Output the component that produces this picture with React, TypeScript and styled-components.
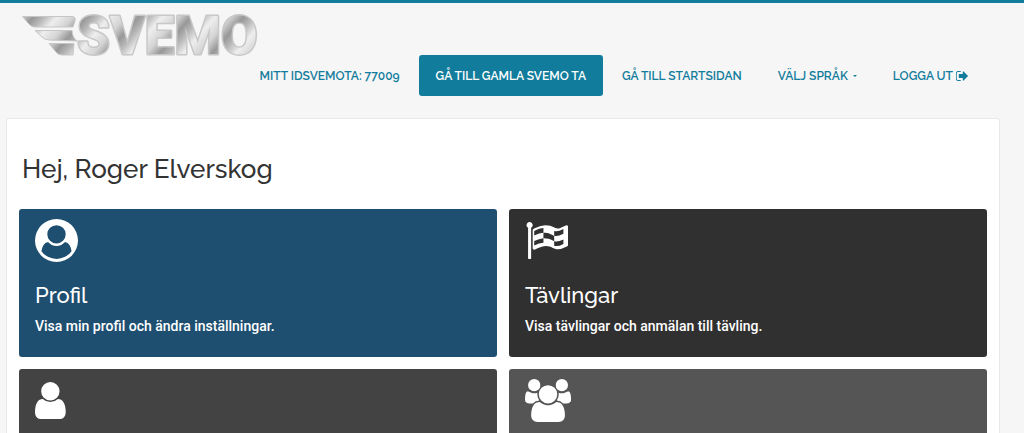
import React from "react";
import styled, { createGlobalStyle } from "styled-components";

const teal = "#127c9c";
const display = `Raleway, Lato, "Open Sans", sans-serif`;

const GlobalStyle = createGlobalStyle`
  *, *::before, *::after { box-sizing: border-box; }
  body {
    margin: 0;
    background: #f6f6f6;
    color: #333;
    font-family: Roboto, "Liberation Sans", sans-serif;
    font-size: 14px;
  }
`;

const Page = styled.div`
  border-top: 3px solid ${teal};
  padding: 0 24px 24px 6px;
`;

const Header = styled.header`
  display: flex;
  flex-direction: column;
  padding: 12px 0 22px 16px;
`;

const LogoLink = styled.a`
  display: block;
  align-self: flex-start;
  height: 40px;
`;

const LogoDrawing = styled.svg`
  display: block;
  overflow: visible;
`;

const Nav = styled.nav`
  display: flex;
  justify-content: flex-end;
  gap: 2px;
  padding-right: 15px;
`;

const navItem = `
  display: flex;
  align-items: center;
  height: 41px;
  padding: 0 17px;
  border: 0;
  border-radius: 3px;
  font: 600 12px/20px ${display};
  text-transform: uppercase;
  text-decoration: none;
  white-space: nowrap;
  cursor: pointer;
`;

const NavLink = styled.a<{ $filled?: boolean }>`
  ${navItem}
  gap: 3px;
  background: ${(p) => (p.$filled ? teal : "transparent")};
  color: ${(p) => (p.$filled ? "#fff" : teal)};
`;

const NavButton = styled.button`
  ${navItem}
  gap: 5px;
  background: transparent;
  color: ${teal};
`;

const Caret = styled.span`
  border: 2px solid transparent;
  border-top-color: currentColor;
  border-bottom: 0;
`;

const Panel = styled.main`
  background: #fff;
  border: 1px solid #e8e8e8;
  border-radius: 3px;
  padding: 33px 12px 12px;
`;

const Greeting = styled.h1`
  margin: 0 0 23px;
  padding-left: 3px;
  color: #333;
  font: 500 26px/34px ${display};
`;

const Tiles = styled.div`
  display: grid;
  grid-template-columns: repeat(2, minmax(0, 1fr));
  gap: 12px;
`;

const Tile = styled.a<{ $color: string }>`
  display: block;
  min-height: 148px;
  padding: 10px 16px;
  border-radius: 3px;
  background: ${(p) => p.$color};
  color: #fff;
  text-decoration: none;
`;

const TileIcon = styled.svg`
  display: block;
  height: 43px;
  fill: currentColor;
`;

const TileTitle = styled.h2`
  margin: 19px 0 6px;
  font: 500 22px/28px ${display};
`;

const TileText = styled.p`
  margin: 0;
  font-weight: 500;
  line-height: 22px;
`;

const icons = {
  profile: {
    box: "0 0 1792 1792",
    d: "M1523 1339q-22-155-87.5-257.5t-184.5-118.5q-67 74-159.5 115.5t-195.5 41.5-195.5-41.5-159.5-115.5q-119 16-184.5 118.5t-87.5 257.5q106 150 271 237.5t356 87.5 356-87.5 271-237.5zm-243-699q0-159-112.5-271.5t-271.5-112.5-271.5 112.5-112.5 271.5 112.5 271.5 271.5 112.5 271.5-112.5 112.5-271.5zm512 256q0 182-71 347.5t-190.5 286-285.5 191.5-349 71-349-71-285.5-191.5-190.5-286-71-347.5 71-348 191-286 286-191 348-71 348 71 286 191 191 286 71 348z",
  },
  flag: {
    box: "64 -128 1792 1792",
    d: "M832 864v-192q-181 16-384 117v185q205-96 384-110zm0-418v-197q-172 8-384 126v189q215-111 384-118zm832 463v-184q-235 116-384 71v-224q-20-6-39-15-5-3-33-17t-34.5-17-31.5-15-34.5-15.5-32.5-13-36-12.5-35-8.5-39.5-7.5-39.5-4-44-2q-23 0-49 3v222h19q102 0 192.5 29t197.5 82q19 9 39 15v188q42 17 91 17 120 0 293-92zm0-427v-189q-169 91-306 91-45 0-78-8v196q148 42 384-90zm-1280-354q0 35-17.5 64t-46.5 46v1266q0 14-9 23t-23 9h-64q-14 0-23-9t-9-23v-1266q-29-17-46.5-46t-17.5-64q0-53 37.5-90.5t90.5-37.5 90.5 37.5 37.5 90.5zm1472 64v763q0 25-12.5 38.5t-39.5 27.5q-215 116-369 116-61 0-123.5-22t-108.5-48-115.5-48-142.5-22q-192 0-464 146-17 9-33 9-26 0-45-19t-19-45v-742q0-32 31-55 21-14 79-43 236-120 421-120 107 0 200 29t219 88q38 19 88 19 54 0 117.5-21t110-47 88-47 54.5-21q26 0 45 19t19 45z",
  },
  user: {
    box: "256 0 1280 1792",
    d: "M1536 1399q0 109-62.5 187t-150.5 78h-854q-88 0-150.5-78t-62.5-187q0-85 8.5-160.5t31.5-152 58.5-131 94-89 134.5-34.5q131 128 313 128t313-128q76 0 134.5 34.5t94 89 58.5 131 31.5 152 8.5 160.5zm-256-887q0 159-112.5 271.5t-271.5 112.5-271.5-112.5-112.5-271.5 112.5-271.5 271.5-112.5 271.5 112.5 112.5 271.5z",
  },
  users: {
    box: "0 0 1920 1792",
    d: "M593 896q-162 5-265 128h-134q-82 0-138-40.5t-56-118.5q0-353 124-353 6 0 43.5 21t97.5 42.5 119 21.5q67 0 133-23-5 37-5 66 0 139 81 256zm1071 637q0 120-73 189.5t-194 69.5h-874q-121 0-194-69.5t-73-189.5q0-53 3.5-103.5t14-109 26.5-108.5 43-97.5 62-81 85.5-53.5 111.5-20q10 0 43 21.5t73 48 107 48 135 21.5 135-21.5 107-48 73-48 43-21.5q61 0 111.5 20t85.5 53.5 62 81 43 97.5 26.5 108.5 14 109 3.5 103.5zm-1024-1277q0 106-75 181t-181 75-181-75-75-181 75-181 181-75 181 75 75 181zm704 384q0 159-112.5 271.5t-271.5 112.5-271.5-112.5-112.5-271.5 112.5-271.5 271.5-112.5 271.5 112.5 112.5 271.5zm576 225q0 78-56 118.5t-138 40.5h-134q-103-123-265-128 81-117 81-256 0-29-5-66 66 23 133 23 59 0 119-21.5t97.5-42.5 43.5-21q124 0 124 353zm-128-609q0 106-75 181t-181 75-181-75-75-181 75-181 181-75 181 75 75 181z",
  },
};

const tiles: { icon: keyof typeof icons; color: string; title?: string; text?: string }[] = [
  { icon: "profile", color: "#1e4f70", title: "Profil", text: "Visa min profil och ändra inställningar." },
  { icon: "flag", color: "#303030", title: "Tävlingar", text: "Visa tävlingar och anmälan till tävling." },
  { icon: "user", color: "#434343" },
  { icon: "users", color: "#555" },
];

function Logo() {
  return (
    <LogoDrawing width="240" height="40" viewBox="0 0 240 40">
      <defs>
        <linearGradient id="chrome" gradientUnits="userSpaceOnUse" x1="0" y1="0" x2="30" y2="26" spreadMethod="repeat">
          <stop offset="0" stopColor="#d4d4d4" />
          <stop offset="0.25" stopColor="#989898" />
          <stop offset="0.45" stopColor="#b8b8b8" />
          <stop offset="0.7" stopColor="#eeeeee" />
          <stop offset="1" stopColor="#d4d4d4" />
        </linearGradient>
      </defs>
      <g fill="url(#chrome)" stroke="#c6c6c6" strokeLinejoin="round">
        <path d="M0.500 1.500H51Q54 2 53 6L51 12H12Q8 11 6 8Z" />
        <path d="M13 15.500H50Q50 22 55 26L27 25Q23 25 20 22Z" />
        <path d="M27 28.500H52L51 40H40Q36 40 34 37Z" />
        <text
          x="55"
          y="39"
          fontFamily="Roboto, sans-serif"
          fontWeight="800"
          fontSize="53"
          stroke="#c8c8c8"
          strokeWidth="3"
          paintOrder="stroke"
        >
          SVEMO
        </text>
      </g>
    </LogoDrawing>
  );
}

function SignOutIcon() {
  return (
    <svg width="12" height="14" viewBox="96 0 1536 1792" fill="currentColor" aria-hidden="true">
      <path d="M704 1440q0 4 1 20t.5 26.5-3 23.500-10 19.500-20.500 6.500h-320q-119 0-203.500-84.500t-84.500-203.500v-704q0-119 84.500-203.500t203.500-84.500h320q13 0 22.500 9.500t9.500 22.500q0 4 1 20t.5 26.500-3 23.500-10 19.500-20.500 6.500h-320q-66 0-113 47t-47 113v704q0 66 47 113t113 47h312l11.500 1 11.500 3 8 5.500 7 9 2 13.500zm928-544q0 26-19 45l-544 544q-19 19-45 19t-45-19-19-45v-288h-448q-26 0-45-19t-19-45v-384q0-26 19-45t45-19h448v-288q0-26 19-45t45-19 45 19l544 544q19 19 19 45z" />
    </svg>
  );
}

export default function App() {
  return (
    <Page>
      <GlobalStyle />
      <Header>
        <LogoLink href="#">
          <Logo />
        </LogoLink>
        <Nav>
          <NavLink href="#">Mitt IdSvemoTA: 77009</NavLink>
          <NavLink href="#" $filled>Gå till gamla Svemo TA</NavLink>
          <NavLink href="#">Gå till startsidan</NavLink>
          <NavButton type="button" aria-haspopup="true">
            Välj språk <Caret />
          </NavButton>
          <NavLink href="#">
            Logga ut <SignOutIcon />
          </NavLink>
        </Nav>
      </Header>
      <Panel>
        <Greeting>Hej, Roger Elverskog</Greeting>
        <Tiles>
          {tiles.map((tile) => (
            <Tile key={tile.icon} href="#" $color={tile.color}>
              <TileIcon viewBox={icons[tile.icon].box} aria-hidden="true">
                <path fillRule="evenodd" d={icons[tile.icon].d} />
              </TileIcon>
              {tile.title && <TileTitle>{tile.title}</TileTitle>}
              {tile.text && <TileText>{tile.text}</TileText>}
            </Tile>
          ))}
        </Tiles>
      </Panel>
    </Page>
  );
}
